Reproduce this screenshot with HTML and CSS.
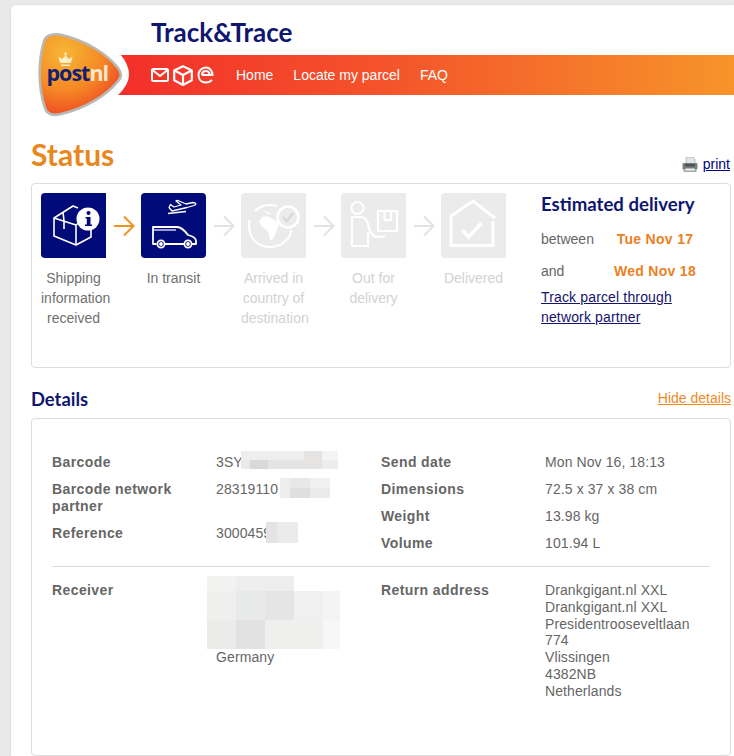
FILE: index.html
```html
<!DOCTYPE html>
<html lang="en">
<head>
<meta charset="utf-8">
<title>Track&amp;Trace</title>
<link rel="stylesheet" href="styles.css">
</head>
<body>
<main class="card">
  <header class="header">
    <svg class="logo" viewBox="0 0 95 86" width="95" height="86" aria-label="PostNL logo">
      <defs>
        <radialGradient id="logoFill" cx="0.3" cy="0.22" r="0.85">
          <stop offset="0" stop-color="#f6b636"/>
          <stop offset="0.55" stop-color="#f58a25"/>
          <stop offset="1" stop-color="#ee4324"/>
        </radialGradient>
      </defs>
      <path d="M81 22 H83 Q92 32 92 43 Q92 53 80 64 H78 L70 50 V36 Z" fill="#fff"/>
      <path d="M7 9C9 3 17 1 25 3 50 9 70 22 81 36 85 41 85 45 81 49 71 62 50 76 24 82 16 84 10 82 8 76 1 55 1 30 7 9Z" fill="url(#logoFill)" stroke="#b8b8b6" stroke-width="2.6"/>
      <path d="M23 31 21.500 24.500 25 27 28.500 23.500 32 27 35.500 24.500 34 31Z M24 32.500H33V34H24Z M27.500 20.500H29.500V23.500H27.500Z" fill="#fdeec9"/>
      <text class="logo-text" x="9.500" y="49"><tspan class="logo-post">post</tspan><tspan class="logo-nl">nl</tspan></text>
    </svg>
    <h1 class="title">Track&amp;Trace</h1>
    <nav class="banner">
      <div class="banner-icons">
        <svg width="18" height="14" viewBox="0 0 18 14" fill="none" stroke="#fff" stroke-width="2"><rect x="1" y="1" width="16" height="12" rx="1.500"/><path d="M1.500 2 9 8 16.500 2"/></svg>
        <svg width="20" height="21" viewBox="0 0 20 21" fill="none" stroke="#fff" stroke-width="2.200" stroke-linejoin="round"><path d="M10 1.200 18.800 5.500V15.300L10 20 1.200 15.300V5.500Z"/><path d="M1.500 5.500 10 10 18.500 5.500M10 10V19.500"/></svg>
        <svg width="17" height="18" viewBox="0 0 17 18" fill="none" stroke="#fff" stroke-width="2"><path d="M5 9H15.500C15.500 4.500 12.500 1.500 9 1.500 4.500 1.500 1.500 5 1.500 9 1.500 13.500 4.500 16.500 9 16.500 11.500 16.500 13.500 15.500 15 14"/><path d="M5 9C5 6.500 6.800 5 9 5 11 5 12.500 6.500 12.500 8"/></svg>
      </div>
      <a class="nav-link" href="#">Home</a>
      <a class="nav-link" href="#">Locate my parcel</a>
      <a class="nav-link" href="#">FAQ</a>
    </nav>
  </header>

  <div class="status-head">
    <h2 class="status-title">Status</h2>
    <div class="print">
      <svg width="16" height="15" viewBox="0 0 16 15">
        <path d="M4 0H11L13 2V7H4Z" fill="#dfe4e6" stroke="#a8adb0" stroke-width="0.700"/>
        <rect x="0.500" y="6" width="15" height="6.500" rx="1" fill="#7a7f82"/>
        <rect x="3" y="7" width="10" height="2.500" fill="#4f5356"/>
        <rect x="1.500" y="12" width="13" height="3" fill="#a7abad"/>
        <rect x="3.500" y="11.500" width="9" height="2" fill="#eef0f1"/>
      </svg>
      <a class="print-link" href="#">print</a>
    </div>
  </div>

  <section class="panel status-panel">
    <ol class="steps">
      <li class="step">
        <div class="tile tile-on tile-square">
          <svg viewBox="0 0 65 65" width="65" height="65" fill="none" stroke="#fff" stroke-width="1.600" stroke-linejoin="round">
            <path d="M37 15 32 13 13 25V43L35 52 50 44V36"/>
            <path d="M13 25 35 32V52M35 32 41 27M22 19 23 28V36"/>
            <circle cx="47" cy="26" r="11.500" fill="#fff" stroke="none"/>
            <circle cx="47.500" cy="20" r="2" fill="#000a78" stroke="none"/>
            <path d="M44.500 24H49.500V31.500H51V33H44V31.500H45.800V25.500H44.500Z" fill="#000a78" stroke="none"/>
          </svg>
        </div>
        <p class="step-label">Shipping information received</p>
      </li>
      <li class="arrow arrow-on"><svg width="22" height="22" viewBox="0 0 22 22" fill="none" stroke="currentColor" stroke-width="2"><path d="M1 11H20M11 1.500 20.500 11 11 20.500"/></svg></li>
      <li class="step">
        <div class="tile tile-on">
          <svg viewBox="0 0 65 65" width="65" height="65" fill="none" stroke="#fff" stroke-width="1.800" stroke-linejoin="round">
            <path d="M28 14.500 31 18 46 14.500 53 12.500C56 11.500 55 9.500 52 9.500L45 11 37 7.500 35 8 40 12 33 14 29.500 11.500Z" stroke-width="1.300"/>
            <path d="M27 20.500 45 18.500" stroke-width="1.300"/>
            <path d="M15.500 51H12V34H36C40 34 44 38 47 42 51 43 55 45 55 48V51H51M43 51H24"/>
            <path d="M12 37H35"  stroke-width="1.200"/>
            <circle cx="20" cy="51" r="3.600"/>
            <circle cx="47" cy="51" r="3.600"/>
            <circle cx="20" cy="51" r="1" fill="#fff"/>
            <circle cx="47" cy="51" r="1" fill="#fff"/>
          </svg>
        </div>
        <p class="step-label">In transit</p>
      </li>
      <li class="arrow"><svg width="22" height="22" viewBox="0 0 22 22" fill="none" stroke="currentColor" stroke-width="2"><path d="M1 11H20M11 1.500 20.500 11 11 20.500"/></svg></li>
      <li class="step step-off">
        <div class="tile tile-off tile-square">
          <svg viewBox="0 0 65 65" width="65" height="65" fill="none" stroke="#fff" stroke-width="2.200">
            <path d="M36 13C33 12.300 31 12 29 12 23 12 18 14 14 18"/>
            <path d="M8.500 27C8.200 29 8 31 8 33 8 45 17 54 29 54 41 54 50 45 50 37"/>
            <path d="M21 24C25 22 30 24 33 27L38 30 36 37 32 46 29 47 27 38 21 34 18 29Z" fill="#fff" stroke="none"/>
            <path d="M24 18 29 21" stroke-width="1.200"/>
            <circle cx="47" cy="24" r="10.500" fill="#ececec" stroke-width="2.600"/>
            <path d="M42 24 46 28 52 20" stroke="#d9d9d9" stroke-width="2.400"/>
          </svg>
        </div>
        <p class="step-label">Arrived in country of destination</p>
      </li>
      <li class="arrow"><svg width="22" height="22" viewBox="0 0 22 22" fill="none" stroke="currentColor" stroke-width="2"><path d="M1 11H20M11 1.500 20.500 11 11 20.500"/></svg></li>
      <li class="step step-off">
        <div class="tile tile-off tile-square">
          <svg viewBox="0 0 65 65" width="65" height="65" fill="none" stroke="#fff" stroke-width="2.200">
            <circle cx="16.500" cy="15" r="6"/>
            <path d="M11 53V24H20C24 24 26 27 27 31 28 37 31 44 37 44L44 43.500M11 53H27V39"/>
            <path d="M37 18H56V38H37ZM43.500 18V27H50V18"/>
          </svg>
        </div>
        <p class="step-label">Out for delivery</p>
      </li>
      <li class="arrow"><svg width="22" height="22" viewBox="0 0 22 22" fill="none" stroke="currentColor" stroke-width="2"><path d="M1 11H20M11 1.500 20.500 11 11 20.500"/></svg></li>
      <li class="step step-off">
        <div class="tile tile-off tile-square">
          <svg viewBox="0 0 65 65" width="65" height="65" fill="none" stroke="#fff" stroke-width="3">
            <path d="M54 25 32 8 10 23V52.500H52V28"/>
            <path d="M21.500 37 27.500 44 40.500 30" stroke-width="3.500"/>
          </svg>
        </div>
        <p class="step-label">Delivered</p>
      </li>
    </ol>
    <aside class="estimate">
      <h3 class="estimate-title">Estimated delivery</h3>
      <div class="estimate-row"><span>between</span><strong class="estimate-date">Tue Nov 17</strong></div>
      <div class="estimate-row"><span>and</span><strong class="estimate-date">Wed Nov 18</strong></div>
      <a class="estimate-link" href="#">Track parcel through<br>network partner</a>
    </aside>
  </section>

  <div class="details-head">
    <h2 class="details-title">Details</h2>
    <a class="hide-link" href="#">Hide details</a>
  </div>

  <section class="panel details-panel">
    <div class="details-grid details-top">
      <dl class="facts">
        <dt>Barcode</dt>
        <dd class="masked">3SY
          <svg class="mosaic mosaic-a" width="97" height="18" shape-rendering="crispEdges"><rect width="97" height="18" fill="#eeeeee"/><rect x="0" y="9" width="9" height="9" fill="#e9e9e9"/><rect x="9" y="9" width="18" height="9" fill="#d9d9d9"/><rect x="27" y="9" width="36" height="9" fill="#e3e3e5"/><rect x="63" y="0" width="18" height="18" fill="#e6e4e2"/><rect x="81" y="0" width="16" height="9" fill="#f4f4f5"/><rect x="81" y="9" width="16" height="9" fill="#eceded"/></svg>
        </dd>
        <dt>Barcode network partner</dt>
        <dd class="masked">28319110
          <svg class="mosaic mosaic-b" width="50" height="20" shape-rendering="crispEdges"><rect width="50" height="20" fill="#eeeeee"/><rect x="10" y="10" width="20" height="10" fill="#dfdfdf"/><rect x="10" y="0" width="20" height="10" fill="#e8e8e8"/><rect x="30" y="0" width="20" height="10" fill="#f0f0f0"/><rect x="30" y="10" width="20" height="10" fill="#e9ebec"/></svg>
        </dd>
        <dt>Reference</dt>
        <dd class="masked">3000459
          <svg class="mosaic mosaic-c" width="32" height="21" shape-rendering="crispEdges"><rect width="32" height="21" fill="#ebebeb"/><rect width="11" height="21" fill="#e4e4e6"/></svg>
        </dd>
      </dl>
      <dl class="facts">
        <dt>Send date</dt><dd>Mon Nov 16, 18:13</dd>
        <dt>Dimensions</dt><dd>72.5 x 37 x 38 cm</dd>
        <dt>Weight</dt><dd>13.98 kg</dd>
        <dt>Volume</dt><dd>101.94 L</dd>
      </dl>
    </div>
    <div class="details-grid details-bottom">
      <dl class="facts">
        <dt>Receiver</dt>
        <dd class="masked">&nbsp;<br>&nbsp;<br>&nbsp;<br>&nbsp;<br>Germany
          <svg class="mosaic mosaic-d" width="133" height="74" shape-rendering="crispEdges"><rect x="0" y="0" width="29" height="15" fill="#f2f2f1"/><rect x="29" y="0" width="29" height="15" fill="#eeeeee"/><rect x="58" y="0" width="29" height="15" fill="#ededed"/><rect x="0" y="15" width="29" height="29" fill="#efefee"/><rect x="29" y="15" width="29" height="29" fill="#e8e9e9"/><rect x="58" y="15" width="29" height="29" fill="#e5e5e5"/><rect x="87" y="15" width="29" height="29" fill="#f0f0f0"/><rect x="116" y="15" width="17" height="29" fill="#f4f4f4"/><rect x="0" y="44" width="29" height="29" fill="#ebebea"/><rect x="29" y="44" width="29" height="29" fill="#e2e2e2"/><rect x="58" y="44" width="58" height="29" fill="#efefee"/><rect x="116" y="44" width="17" height="29" fill="#f7f7f7"/></svg>
        </dd>
      </dl>
      <dl class="facts">
        <dt>Return address</dt>
        <dd>Drankgigant.nl XXL<br>Drankgigant.nl XXL<br>Presidentrooseveltlaan 774<br>Vlissingen<br>4382NB<br>Netherlands</dd>
      </dl>
    </div>
  </section>
</main>
</body>
</html>
```

FILE: styles.css
```css
* { box-sizing: border-box; }

html, body {
  margin: 0;
  height: 756px;
  overflow: hidden;
}

body {
  background: #e9e9e9;
  padding: 5px 0 0 11px;
  font: 14px/16.8px "Liberation Sans", Arial, sans-serif;
  color: #666;
}

.card {
  background: #fff;
  border-radius: 5px 0 0 0;
  width: 723px;
  height: 751px;
  padding: 0 3px 0 20px;
  box-shadow: 0 0 2px rgba(0, 0, 0, 0.12);
}

.header {
  position: relative;
  margin-left: -20px;
  margin-right: -3px;
  padding-top: 10px;
}

.logo {
  position: absolute;
  left: 26px;
  top: 27px;
  z-index: 1;
}

.logo-text {
  font: 700 21.5px "Open Sans", "Liberation Sans", sans-serif;
  letter-spacing: -1px;
}
.logo-post { fill: #14206e; }
.logo-nl { fill: #fbe9cf; }

.title {
  margin: 0 0 6px 140px;
  font: 700 26px/34px Lato, "Noto Sans", sans-serif;
  color: #0f1670;
}

.banner {
  display: flex;
  align-items: center;
  height: 40px;
  margin-left: 107px;
  padding-left: 33px;
  background: linear-gradient(90deg, #f32f2a 0%, #f4552b 45%, #f7942a 100%);
}

.banner-icons {
  display: flex;
  align-items: center;
  gap: 4px;
  margin-right: 22px;
}

.nav-link {
  color: #fff;
  text-decoration: none;
  margin-right: 20px;
}

.status-head {
  display: flex;
  justify-content: space-between;
  align-items: flex-end;
  margin-top: 40px;
  height: 48px;
  padding-bottom: 10px;
}

.status-title {
  margin: 0 0 -1px;
  font: 700 30px/40px Lato, "Noto Sans", sans-serif;
  color: #e8871e;
}

.print {
  display: flex;
  align-items: center;
  gap: 5px;
  margin-right: 1px;
}

.print-link { color: #00007f; }

.panel {
  border: 1px solid #dcdcdc;
  border-radius: 4px;
  background: #fff;
}

.status-panel {
  display: flex;
  height: 185px;
  padding: 9px;
}

.steps {
  display: flex;
  align-items: flex-start;
  margin: 0;
  padding: 0;
  list-style: none;
}

.step {
  width: 65px;
}

.tile {
  width: 65px;
  height: 65px;
  border-radius: 4px;
}
.tile svg { display: block; }
.tile-on { background: #000a78; }
.tile-off { background: #ebebeb; }
.tile-square { border-radius: 4px 0 0 4px; }

.step-label {
  margin: 10px 0 0;
  text-align: center;
  line-height: 20px;
  color: #707070;
}
.step-off .step-label { color: #d2d2d2; }

.arrow {
  display: flex;
  align-items: center;
  justify-content: center;
  width: 35px;
  height: 65px;
  color: #e2e2e2;
}
.arrow-on { color: #f0921e; }

.estimate {
  margin-left: 35px;
  width: 170px;
  color: #666;
}

.estimate-title {
  margin: -1px 0 13px;
  font: 700 18.6px/24px Lato, "Noto Sans", sans-serif;
  color: #0f1670;
}

.estimate-row {
  display: grid;
  grid-template-columns: 64px 100px;
  height: 32px;
  line-height: 20px;
}

.estimate-date {
  color: #ea7f24;
  text-align: center;
  letter-spacing: 0.3px;
}

.estimate-link {
  display: block;
  margin-top: -6px;
  line-height: 20px;
  letter-spacing: 0.15px;
  color: #14146e;
}

.details-head {
  display: flex;
  justify-content: space-between;
  align-items: center;
  height: 50px;
  padding-bottom: 0;
}

.details-title {
  margin: 12px 0 0;
  font: 700 18.4px/24px Lato, "Noto Sans", sans-serif;
  color: #0f1670;
}

.hide-link {
  margin-top: 10px;
  color: #ef8a22;
}

.details-panel {
  height: 338px;
  padding: 35px 20px 0;
}

.details-grid {
  display: grid;
  grid-template-columns: 329px 1fr;
}

.details-top {
  padding-bottom: 14px;
  border-bottom: 1px solid #dcdcdc;
  line-height: 17px;
}

.details-bottom {
  padding-top: 15px;
}

.facts {
  display: grid;
  grid-template-columns: 164px 1fr;
  row-gap: 10px;
  align-content: start;
  margin: 0;
}

.facts dt {
  width: 150px;
  font-weight: 700;
  letter-spacing: 0.4px;
  color: #666;
}

.facts dd {
  margin: 0;
  letter-spacing: 0.1px;
}

.masked {
  position: relative;
}

.mosaic {
  position: absolute;
  display: block;
}
.mosaic-a { left: 25px; top: -3px; }
.mosaic-b { left: 64px; top: -3px; }
.mosaic-c { left: 50px; top: -3px; }
.mosaic-d { left: -9px; top: -6px; }
```
